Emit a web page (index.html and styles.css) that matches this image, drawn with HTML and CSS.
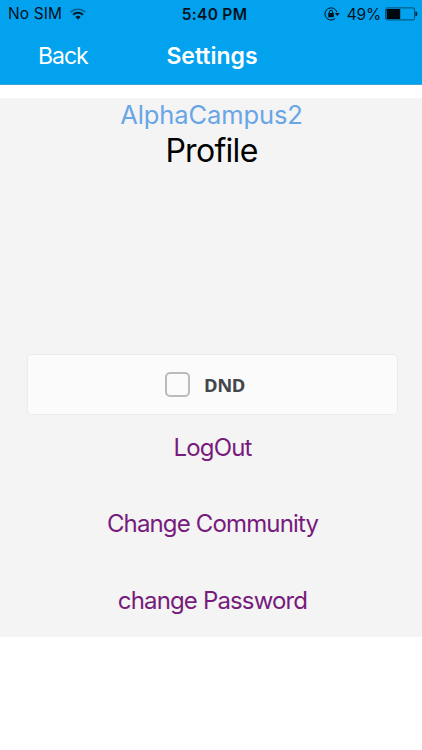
FILE: index.html
```html
<!DOCTYPE html>
<html lang="en">
<head>
<meta charset="utf-8">
<title>Settings</title>
<link rel="stylesheet" href="styles.css">
</head>
<body>
<header class="header">
  <div class="status">
    <div class="status-left">
      <span class="carrier">No SIM</span>
      <svg class="wifi" width="16" height="12" viewBox="0 0 16 12" fill="none" stroke-width="2">
        <path d="M.7 4.2C4.7.3 11.3.3 15.3 4.2" stroke="#07618f" stroke-width="1.6"/>
        <path d="M3.1 6.8C5.8 4.2 10.2 4.2 12.9 6.8" stroke="#001a2a"/>
        <path d="M5.3 8.9C6.8 7.5 9.2 7.5 10.7 8.9L8 11.6Z" fill="#001a2a"/>
      </svg>
    </div>
    <span class="time">5:40 PM</span>
    <div class="status-right">
      <svg class="lock" width="16" height="14" viewBox="0 0 16 14" fill="none" stroke="#00121e">
        <path d="M12.9 5.2A6.1 6.1 0 1 0 11.2 11.4" stroke-width="1"/>
        <path d="M10.8 6H15.8L13.3 9Z" fill="#00121e" stroke="none"/>
        <rect x="4.2" y="6" width="5.6" height="4.3" rx=".5" fill="#00121e" stroke="none"/>
        <path d="M5.4 6.2V4.9A1.6 1.6 0 0 1 8.6 4.9V6.2" stroke-width="1"/>
      </svg>
      <span class="percent">49%</span>
      <svg class="battery" width="33" height="14" viewBox="0 0 33 14">
        <rect x=".6" y=".9" width="29" height="12" rx="1.6" fill="none" stroke="#034a70"/>
        <rect x="1.6" y="2" width="13.6" height="10" fill="#000810"/>
        <path d="M30.4 4.8h.6a1.3 1.3 0 0 1 1.3 1.3v1.6a1.3 1.3 0 0 1-1.3 1.3h-.6z" fill="#00283e"/>
      </svg>
    </div>
  </div>
  <nav class="navbar">
    <a class="back">Back</a>
    <h1 class="title">Settings</h1>
  </nav>
</header>
<main class="content">
  <div class="community">AlphaCampus2</div>
  <h2 class="profile">Profile</h2>
  <label class="dnd"><span class="box"></span><span class="dnd-text">DND</span></label>
  <div class="links">
    <a class="logout">LogOut</a>
    <a class="change-community">Change Community</a>
    <a class="change-password">change Password</a>
  </div>
</main>
</body>
</html>
```
FILE: styles.css
```css
* { box-sizing: border-box; }
body { margin: 0; background: #fff; font-family: Inter, "Liberation Sans", sans-serif; }
.header { height: 85px; background: #03a2ee; border-bottom: 1px solid #3fa5d8; }
.status { display: grid; grid-template-columns: 1fr auto 1fr; height: 28px; align-items: center; padding: 0 4px 0 8px; color: #00121e; font-size: 15.5px; line-height: 28px; }
.status-left, .status-right { display: flex; align-items: center; }
.status-right { justify-content: flex-end; }
.carrier { letter-spacing: 0.1px; }
.wifi { margin-left: 8px; }
.time { font-weight: 600; letter-spacing: 0.3px; padding: 1px 0 0 3px; line-height: 27px; }
.percent { margin: 0 4px 0 7px; letter-spacing: -0.2px; padding-top: 1px; line-height: 27px; }
.navbar { display: grid; grid-template-columns: 1fr auto 1fr; align-items: center; height: 56px; color: #fff; }
.back { padding-left: 38px; font-size: 23px; letter-spacing: -1px; }
.title { margin: 0; padding-left: 2px; font-size: 23px; font-weight: 600; }
.content { margin-top: 13px; height: 539px; padding: 0 24px 0 27px; background: #f4f4f4; text-align: center; }
.community { height: 34px; line-height: 34px; font-size: 25.5px; letter-spacing: -0.1px; color: #68a6e6; padding-right: 2px; }
.profile { margin: 0; height: 38px; line-height: 38px; font-size: 32px; font-weight: 400; letter-spacing: -0.7px; color: #000; padding-right: 2px; }
.dnd { display: flex; align-items: center; justify-content: center; gap: 14px; height: 61px; margin-top: 184px; padding-right: 15px; background: #fbfbfb; border: 1px solid #ececec; border-radius: 4px; }
.box { width: 25px; height: 25px; border: 2px solid #bbb; border-radius: 5px; }
.dnd-text { font-family: "Noto Sans", sans-serif; font-size: 18.5px; font-weight: 700; letter-spacing: -0.4px; color: #44464b; }
.links { display: flex; flex-direction: column; align-items: center; gap: 46px; margin-top: 18px; color: #771b7c; font-size: 24px; letter-spacing: -0.85px; line-height: 30.3px; }
```
